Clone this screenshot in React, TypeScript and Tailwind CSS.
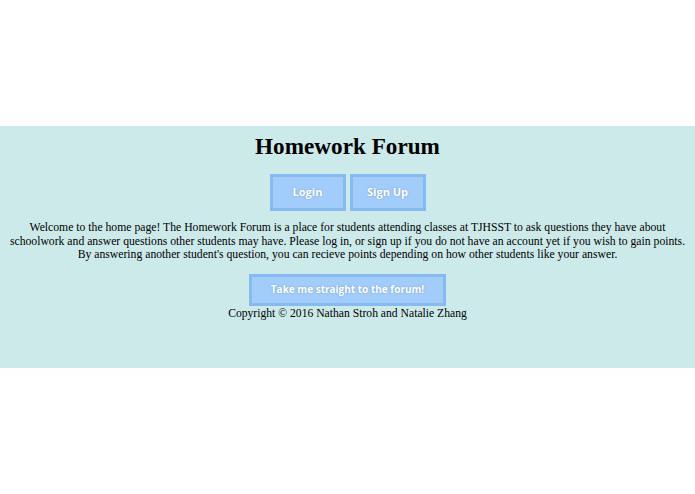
import React from "react";

const btn =
  "inline-block bg-[#a2cdfb] border-[3px] border-[#86baf2] text-white font-bold [font-family:'Open_Sans',sans-serif] [text-shadow:0_0_2px_rgba(80,120,170,0.6)] align-top";

export default function App() {
  return (
    <div className="w-[695px] h-[494px] bg-white [font-family:'Liberation_Serif',serif] text-black">
      <div className="h-[126px]" />
      <div className="bg-[#cdeaea] h-[242px] flex flex-col items-center text-center">
        <h1 className="mt-[6px] text-[23.2px] font-bold leading-[28px]">Homework Forum</h1>
        <div className="mt-[14px] flex gap-[4px]">
          <button className={`${btn} text-[11px] w-[76px] h-[37px]`}>Login</button>
          <button className={`${btn} text-[11px] w-[76px] h-[37px]`}>Sign Up</button>
        </div>
        <p className="mt-[10px] text-[11.7px] leading-[13.5px] px-[2px]">
          Welcome to the home page! The Homework Forum is a place for students attending classes at TJHSST to ask questions they have about schoolwork and answer questions other students may have. Please log in, or sign up if you do not have an account yet if you wish to gain points. By answering another student's question, you can recieve points depending on how other students like your answer.
        </p>
        <button className={`${btn} text-[10px] mt-[12px] w-[197px] h-[32px]`}>Take me straight to the forum!</button>
        <p className="text-[11.65px] leading-[14px] mt-[1px]">Copyright © 2016 Nathan Stroh and Natalie Zhang</p>
      </div>
    </div>
  );
}
